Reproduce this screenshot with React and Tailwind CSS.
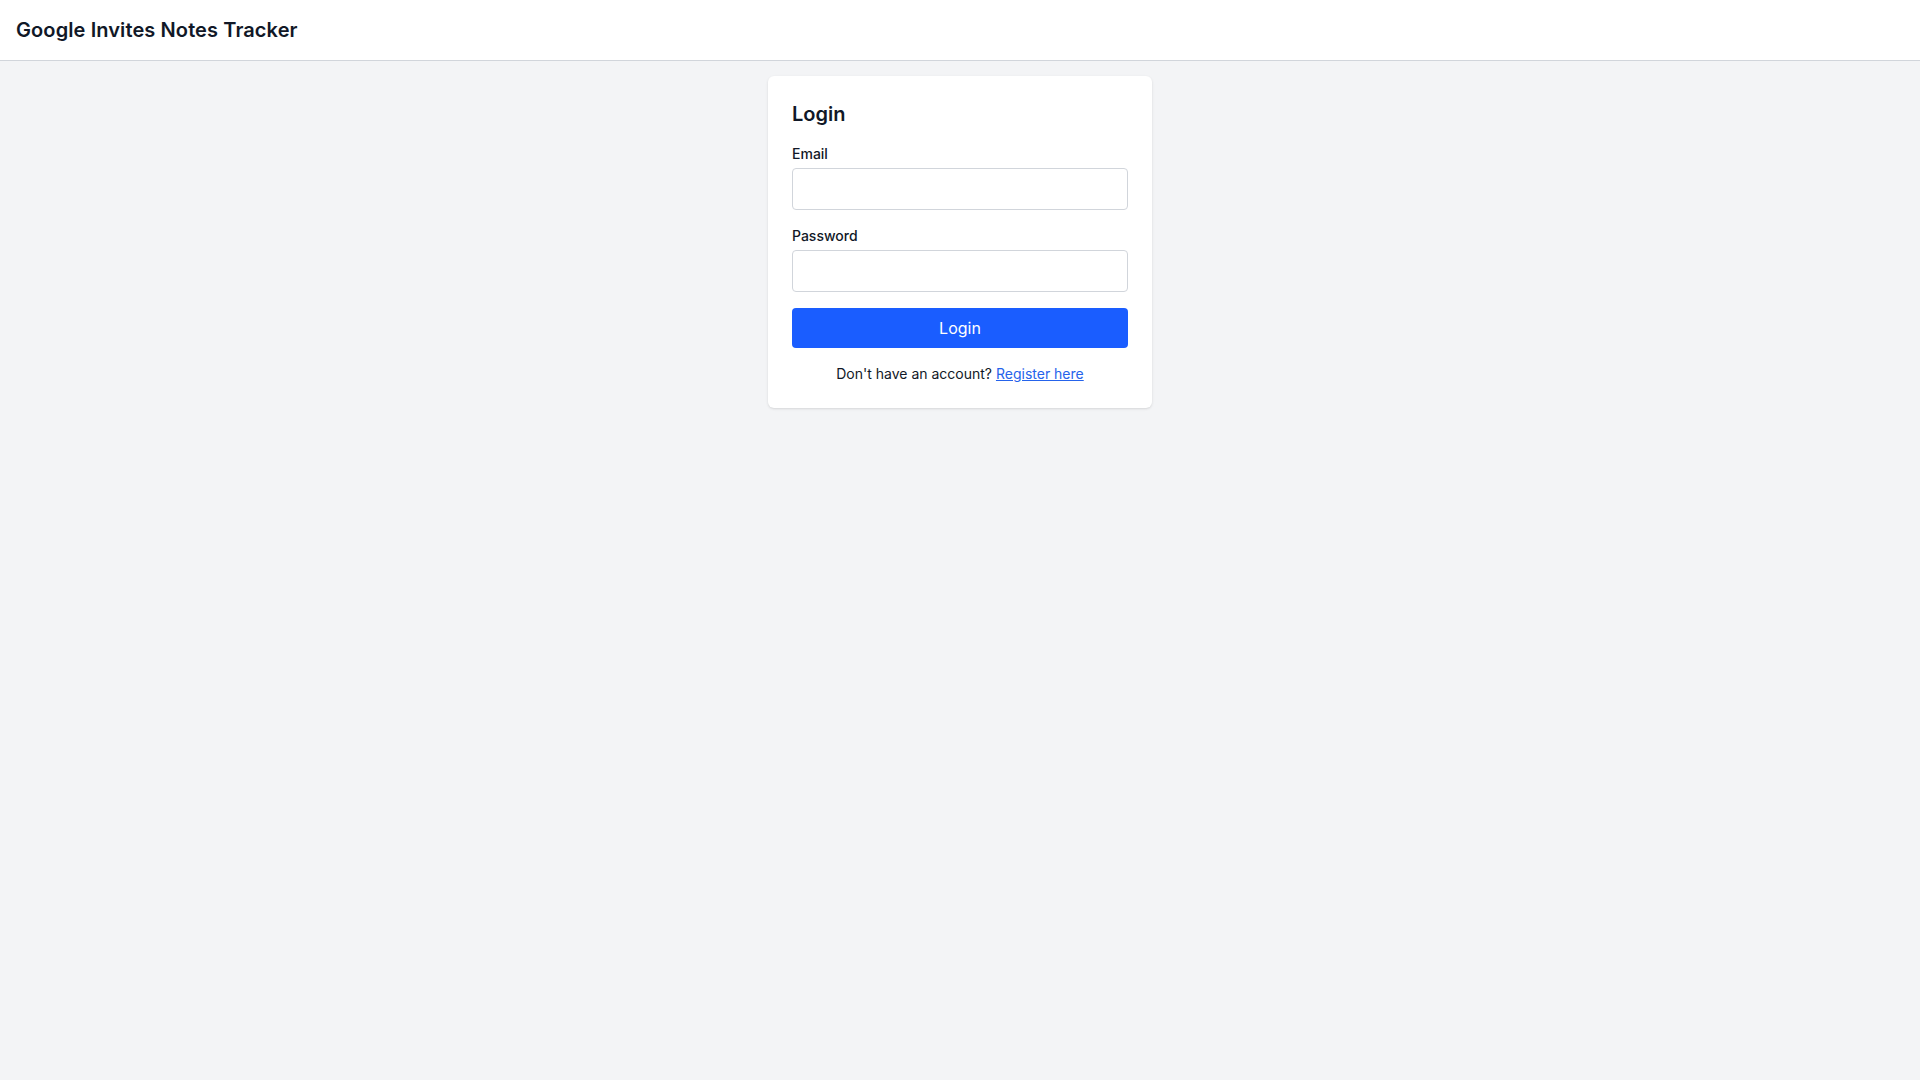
import React, { useState } from "react";

export default function App() {
    const [email, setEmail] = useState("");
    const [password, setPassword] = useState("");

    return (
        <div
            className="min-h-screen bg-[#f3f4f6] text-[#111827]"
            style={{ fontFamily: "Inter, 'Noto Sans', sans-serif" }}
        >
            {/* Header */}
            <header className="h-[61px] bg-white border-b border-[#d1d5db] flex items-center px-4">
                <h1 className="text-xl font-semibold tracking-[0.1px]">Google Invites Notes Tracker</h1>
            </header>

            {/* Login card */}
            <main className="flex justify-center pt-[15px]">
                <div className="w-[384px] bg-white rounded-md shadow-sm p-6">
                    <h2 className="text-xl font-semibold mb-4">Login</h2>
                    <form className="space-y-4" onSubmit={(e) => e.preventDefault()}>
                        <Field label="Email" type="email" value={email} onChange={setEmail} />
                        <Field label="Password" type="password" value={password} onChange={setPassword} />
                        <button
                            type="submit"
                            className="w-full h-10 bg-[#1a5dff] hover:bg-[#0f4fe6] text-white text-base rounded"
                        >
                            Login
                        </button>
                    </form>
                    <p className="text-sm text-center mt-4">
                        Don't have an account?{" "}
                        <a href="#" className="text-[#2563eb] underline">Register here</a>
                    </p>
                </div>
            </main>
        </div>
    );
}

const Field = ({ label, type, value, onChange }) => (
    <div>
        <label className="block text-sm font-medium mb-1">{label}</label>
        <input
            type={type}
            value={value}
            onChange={(e) => onChange(e.target.value)}
            className="w-full h-[42px] px-3 border border-[#d1d5db] rounded bg-white outline-none focus:border-[#1a5dff]"
        />
    </div>
);
